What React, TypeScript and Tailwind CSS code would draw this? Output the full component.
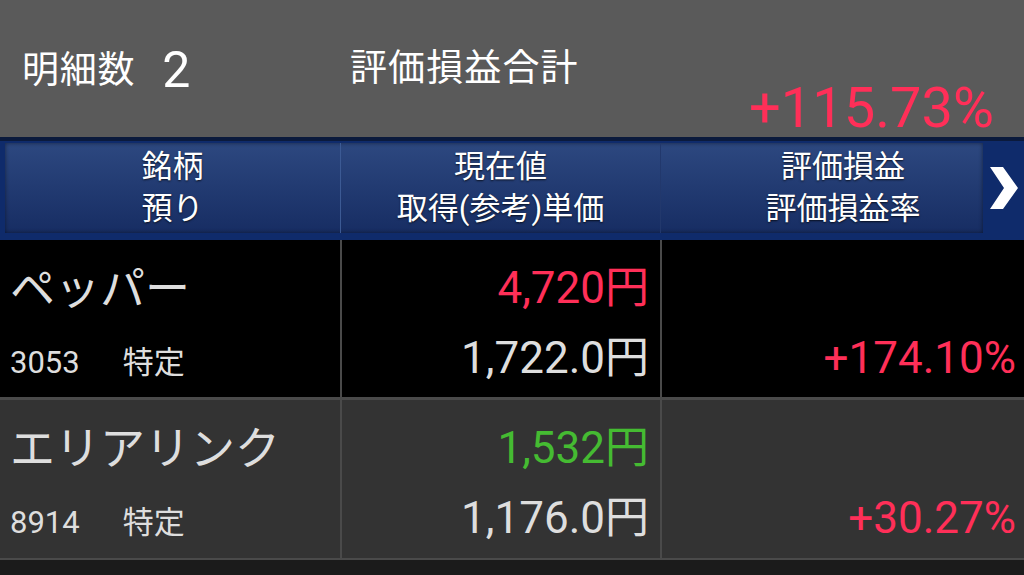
const font = "font-['Roboto','Noto_Sans_CJK_JP',sans-serif]";

interface Holding {
  name: string;
  code: string;
  account: string;
  price: string;
  priceColor: string;
  cost: string;
  rate: string;
  rowBg: string;
  border: string;
}

const holdings: Holding[] = [
  {
    name: "ペッパー",
    code: "3053",
    account: "特定",
    price: "4,720円",
    priceColor: "text-[#ff2f58]",
    cost: "1,722.0円",
    rate: "+174.10%",
    rowBg: "bg-black",
    border: "border-b-[3px]",
  },
  {
    name: "エリアリンク",
    code: "8914",
    account: "特定",
    price: "1,532円",
    priceColor: "text-[#45bb32]",
    cost: "1,176.0円",
    rate: "+30.27%",
    rowBg: "bg-[#333333]",
    border: "border-b-2",
  },
];

function Chevron() {
  return (
    <svg width="30" height="44" viewBox="0 0 30 44">
      <polygon points="1,1 14,1 29,22 14,43 1,43 15,22" fill="#ffffff" />
    </svg>
  );
}

export default function App() {
  return (
    <div className={`w-[1024px] h-[575px] overflow-hidden bg-[#1b1b1b] ${font}`}>
      {/* summary */}
      <div className="h-[137px] bg-[#5a5a5a] pt-[48px]">
        <div className="h-[44px] flex items-center pl-[22px] text-white">
          <div className="w-[328px] flex items-center">
            <span className="text-[37px] leading-none tracking-[0.02em]">明細数</span>
            <span className="ml-[27px] text-[50px] leading-none">2</span>
          </div>
          <span className="text-[37px] leading-none tracking-[0.03em] -mt-[4px]">評価損益合計</span>
        </div>
        <div className="-mt-[12px] flex justify-end pr-[30px]">
          <span className="text-[56px] leading-[56px] text-[#ff2f58]">+115.73%</span>
        </div>
      </div>

      {/* column header */}
      <div className="h-[103px] bg-[#0f2b6b] border-t-[4px] border-[#0b1a3c] flex">
        <div className="flex-1 ml-[5px] mt-[2px] mb-[7px] flex bg-gradient-to-b from-[#2d4880] to-[#172d63] shadow-[inset_0_0_4px_rgba(0,0,0,0.5)] text-white text-[31px] leading-[42px] [text-shadow:0_1px_2px_rgba(0,0,0,0.7)]">
          <div className="w-[336px] flex flex-col items-center justify-center border-r border-[#3c5a94]">
            <span>銘柄</span>
            <span>預り</span>
          </div>
          <div className="w-[320px] flex flex-col items-center justify-center border-r border-[#22386c]">
            <span>現在値</span>
            <span>取得(参考)単価</span>
          </div>
          <div className="flex-1 flex flex-col items-center justify-center pl-[42px]">
            <span>評価損益</span>
            <span>評価損益率</span>
          </div>
        </div>
        <div className="w-[41px] flex items-center justify-center pb-[6px]">
          <Chevron />
        </div>
      </div>

      {/* holdings */}
      {holdings.map((h) => (
        <div key={h.code} className={`h-[160px] flex ${h.rowBg} ${h.border} border-[#4a4a4a]`}>
          <div className="w-[340px] pt-[15px] pl-[10px] text-[#dedede]">
            <div className="h-[70px] flex items-center text-[45px]">{h.name}</div>
            <div className="h-[70px] pt-[7px] flex items-center text-[31px]">
              <span>{h.code}</span>
              <span className="ml-[43px]">{h.account}</span>
            </div>
          </div>
          <div className="w-[2px] bg-[#4a4a4a]" />
          <div className="w-[318px] pt-[13px] pr-[11px] flex flex-col items-end text-[44px]">
            <div className={`h-[70px] flex items-center ${h.priceColor}`}>{h.price}</div>
            <div className="h-[70px] flex items-center text-[#dedede]">{h.cost}</div>
          </div>
          <div className="w-[2px] bg-[#4a4a4a]" />
          <div className="flex-1 pt-[13px] pr-[8px] flex flex-col items-end text-[44px]">
            <div className="h-[70px]" />
            <div className="h-[70px] flex items-center text-[#ff2f58]">{h.rate}</div>
          </div>
        </div>
      ))}
    </div>
  );
}
